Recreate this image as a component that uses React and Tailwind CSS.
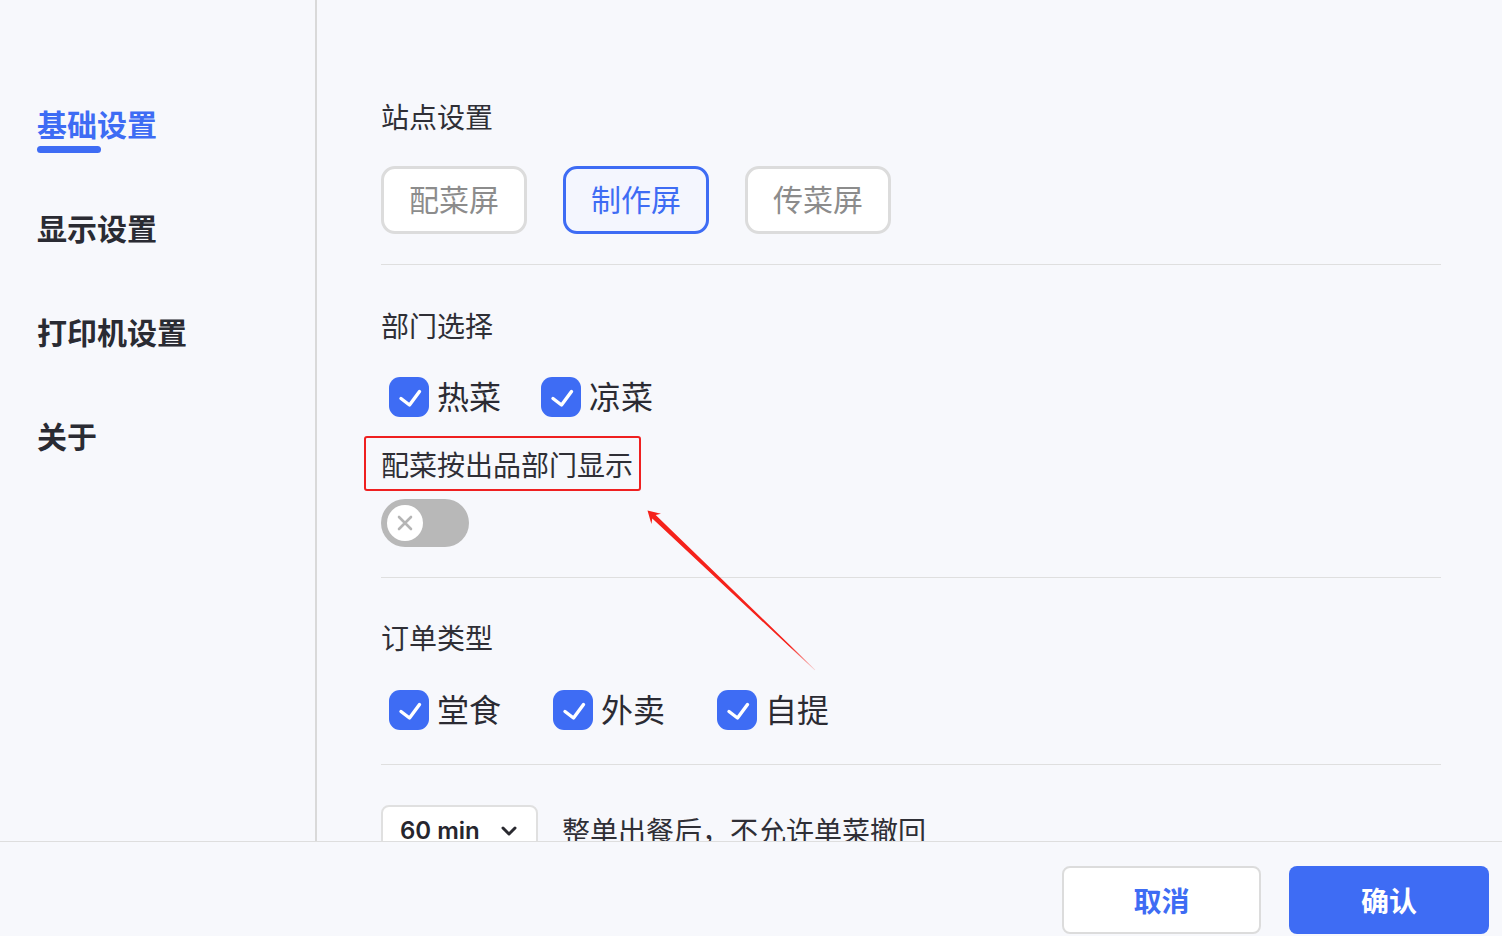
import React from "react";

const CJK = { fontFamily: '"Noto Sans CJK SC", "Noto Sans", sans-serif' };

function Check({ label, className = "" }) {
  return (
    <div className={"flex items-center h-[40px] " + className}>
      <div className="w-[40px] h-[40px] rounded-[11px] bg-[#3e6cf4] flex items-center justify-center">
        <svg width="40" height="40" viewBox="0 0 40 40">
          <path d="M12 21.5 L20.5 28 L30.5 14.5" fill="none" stroke="#fff" strokeWidth="3.4" strokeLinecap="round" strokeLinejoin="round" />
        </svg>
      </div>
      <span className="ml-[8px] pb-[4px] text-[32px] leading-[36px] text-[#2b2b33]">{label}</span>
    </div>
  );
}

function SiteBtn({ label, active }) {
  return (
    <div
      className={
        "w-[146px] h-[68px] rounded-[14px] border-[3px] flex items-center justify-center pb-[3px] text-[30px] " +
        (active ? "border-[#3e6cf4] bg-[#f4f6fe] text-[#3e6cf4]" : "border-[#dcdcdc] bg-white text-[#8c8c8c]")
      }
    >
      {label}
    </div>
  );
}

export default function App() {
  return (
    <div className="w-[1502px] h-[936px] flex flex-col bg-[#f7f8fc] relative overflow-hidden" style={CJK}>
      <div className="flex flex-1 min-h-0">
        <aside className="w-[317px] shrink-0 border-r-2 border-[#d9d9d9] pt-[103px] pl-[37px]">
          <div className="h-[104px] flex flex-col">
            <span className="text-[30px] leading-[40px] font-bold text-[#3e6cf4]">基础设置</span>
            <span className="mt-[3px] w-[64px] h-[7px] rounded-full bg-[#3e6cf4]" />
          </div>
          <div className="h-[104px] text-[30px] leading-[40px] font-bold text-[#2a2b33]">显示设置</div>
          <div className="h-[104px] text-[30px] leading-[40px] font-bold text-[#2a2b33]">打印机设置</div>
          <div className="h-[104px] text-[30px] leading-[40px] font-bold text-[#2a2b33]">关于</div>
        </aside>
        <main className="flex-1 min-w-0 overflow-hidden pl-[64px] pr-[61px] pt-[96px]">
          <div className="text-[28px] leading-[40px] text-[#2f2f36]">站点设置</div>
          <div className="mt-[30px] flex gap-[36px]">
            <SiteBtn label="配菜屏" />
            <SiteBtn label="制作屏" active />
            <SiteBtn label="传菜屏" />
          </div>
          <div className="mt-[30px] h-px bg-[#dfdfdf]" />

          <div className="mt-[40px] text-[28px] leading-[40px] text-[#2f2f36]">部门选择</div>
          <div className="mt-[32px] flex pl-[8px]">
            <Check label="热菜" />
            <Check label="凉菜" className="ml-[40px]" />
          </div>
          <div className="mt-[27px] relative w-max">
            <div className="text-[28px] leading-[40px] text-[#2f2f36]">配菜按出品部门显示</div>
            <div className="absolute -left-[17px] -top-[8px] w-[277px] h-[55px] border-2 border-[#ef2020] rounded-[3px]" />
          </div>
          <div className="mt-[15px] w-[88px] h-[48px] rounded-full bg-[#b8b8b8] flex items-center pl-[6px]">
            <div className="w-[36px] h-[36px] rounded-full bg-white flex items-center justify-center">
              <svg width="18" height="18" viewBox="0 0 18 18">
                <path d="M3 3 L15 15 M15 3 L3 15" stroke="#b5b5b5" strokeWidth="2.6" strokeLinecap="round" />
              </svg>
            </div>
          </div>
          <div className="mt-[30px] h-px bg-[#dfdfdf]" />

          <div className="mt-[39px] text-[28px] leading-[40px] text-[#2f2f36]">订单类型</div>
          <div className="mt-[33px] flex pl-[8px]">
            <Check label="堂食" />
            <Check label="外卖" className="ml-[52px]" />
            <Check label="自提" className="ml-[52px]" />
          </div>
          <div className="mt-[34px] h-px bg-[#dfdfdf]" />

          <div className="mt-[40px] flex items-start">
            <div className="w-[157px] h-[56px] rounded-[8px] border-2 border-[#e0e0e0] bg-white flex items-center pl-[17px] pr-[18px] pb-[4px] justify-between">
              <span className="text-[24px] font-semibold text-[#26262e]" style={{ fontFamily: "Inter, sans-serif" }}>60 min</span>
              <svg width="18" height="12" viewBox="0 0 18 12">
                <path d="M3 3 L9 9 L15 3" fill="none" stroke="#2a2a30" strokeWidth="3" strokeLinecap="round" strokeLinejoin="round" />
              </svg>
            </div>
            <span className="ml-[24px] text-[28px] leading-[50px] text-[#2f2f36]">整单出餐后，不允许单菜撤回</span>
          </div>
        </main>
      </div>
      <footer className="h-[95px] shrink-0 border-t border-[#dedede] flex justify-end items-start pt-[24px] pr-[13px] gap-[28px]">
        <button className="w-[199px] h-[68px] rounded-[8px] border-2 border-[#dcdcdc] bg-white text-[28px] font-bold text-[#3e6cf4]">取消</button>
        <button className="w-[200px] h-[68px] rounded-[8px] bg-[#3e6cf4] text-[28px] font-bold text-white">确认</button>
      </footer>

      <svg className="absolute left-0 top-0 pointer-events-none" width="1502" height="936" viewBox="0 0 1502 936">
        <defs>
          <linearGradient id="ag" x1="647" y1="510" x2="815" y2="670" gradientUnits="userSpaceOnUse">
            <stop offset="0" stopColor="#f5221b" />
            <stop offset="0.85" stopColor="#f5221b" />
            <stop offset="1" stopColor="#f5221b" stopOpacity="0.15" />
          </linearGradient>
        </defs>
        <polygon
          points="647.5,510.5 661,513.7 655.7,514.9 815.3,669.7 814.7,670.3 652.3,518.5 651.4,523.9"
          fill="url(#ag)"
        />
      </svg>
    </div>
  );
}
